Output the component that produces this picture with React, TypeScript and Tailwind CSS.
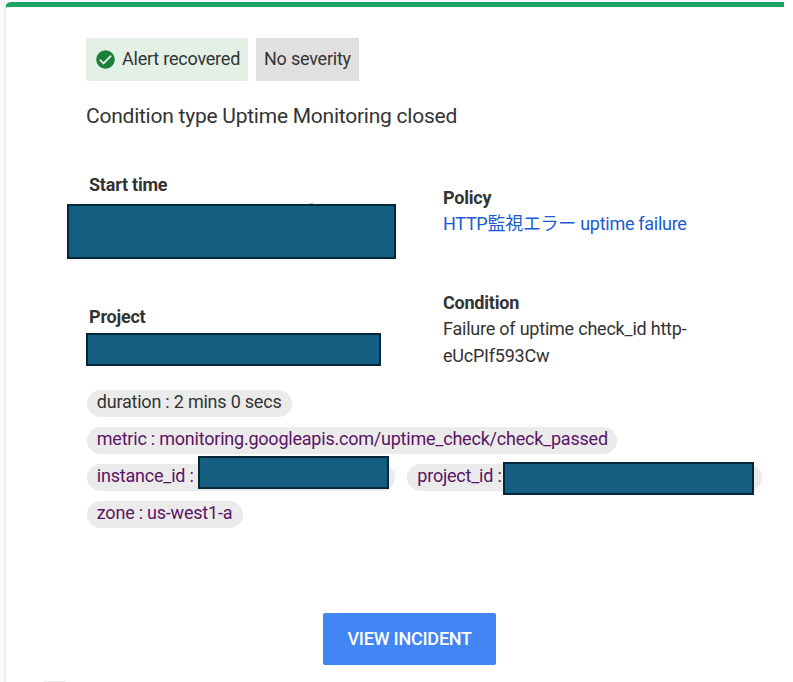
import type { ReactNode } from "react";

function Redacted({ className }: { className: string }) {
  return <div className={`border-2 border-[#04263a] bg-[#156082] ${className}`} />;
}

function Chip({ children, className }: { children: ReactNode; className: string }) {
  return (
    <div className={`relative h-[26.5px] rounded-full bg-[#ebebeb] pl-[10.3px] leading-[24px] ${className}`}>
      {children}
    </div>
  );
}

export default function App() {
  return (
    <div className="flex h-[682px] w-[793px] overflow-hidden bg-white font-['Roboto','Noto_Sans_CJK_JP',sans-serif] text-[18px] leading-[26px] tracking-[-0.22px] text-[#333333]">
      <div className="w-[5px] shrink-0 bg-linear-to-r from-[#fcfcfc] to-[#f5f5f5]" />
      <main className="mt-[2px] flex h-[680px] w-[779px] shrink-0 flex-col whitespace-nowrap rounded-tl-[6px] border-l border-t-[5px] border-l-[#e8e8e8] border-t-[#1ca261] bg-white">
        <div className="flex shrink-0 gap-[8px] pl-[80px] pt-[31px]">
          <div className="flex h-[43px] w-[162px] items-center rounded-[2px] bg-[#e2f0e6] pl-[10px]">
            <svg className="mr-[7px] size-[19px] shrink-0" viewBox="0 0 19 19" fill="none">
              <circle cx="9.5" cy="9.5" r="9.3" fill="#188038" />
              <path d="m3.8 9.6 3.7 3.7 7.6-7.6" stroke="#e2f0e6" strokeWidth="1.9" />
            </svg>
            <span className="pb-[2px]">Alert recovered</span>
          </div>
          <div className="h-[43px] w-[103px] bg-[#e0e0e0] pl-[8px] pt-[8px]">
            <span>No severity</span>
          </div>
        </div>
        <h1 className="mt-[21px] shrink-0 pl-[80px] text-[21px] leading-[28px] tracking-[-0.24px]">
          Condition type Uptime Monitoring closed
        </h1>
        <div className="mt-[41px] flex h-[219px] shrink-0">
          <section className="w-[376px] pl-[61px]">
            <h2 className="pl-[22px] pt-px font-bold">Start time</h2>
            <div className="ml-[243px] mt-[5px] h-px w-[3px] bg-[#b8b8b8]" />
            <Redacted className="h-[55px] w-[329px]" />
            <h2 className="mt-[45px] pl-[22px] font-bold">Project</h2>
            <Redacted className="ml-[19px] mt-[3px] h-[33px] w-[295px]" />
          </section>
          <section className="pl-[61px] pt-[14px]">
            <h2 className="font-bold">Policy</h2>
            <a className="block tracking-[-0.28px] text-[#1a5bd3]">HTTP監視エラー uptime failure</a>
            <h2 className="mt-[53px] font-bold">Condition</h2>
            <p>Failure of uptime check_id http-</p>
            <p className="pt-px">eUcPIf593Cw</p>
          </section>
        </div>
        <div className="flex shrink-0 flex-col gap-[10.5px] pl-[80.5px] text-[#5b1464]">
          <Chip className="w-[205px] text-[#333333]">duration : 2 mins 0 secs</Chip>
          <Chip className="w-[530.5px]">metric : monitoring.googleapis.com/uptime_check/check_passed</Chip>
          <div className="flex gap-[12.5px]">
            <Chip className="w-[308px]">
              instance_id :
              <Redacted className="absolute left-[111.5px] top-[-8px] h-[33px] w-[191px]" />
            </Chip>
            <Chip className="w-[355px]">
              project_id :
              <Redacted className="absolute left-[96px] top-[-2px] h-[33px] w-[251px]" />
            </Chip>
          </div>
          <Chip className="w-[156px]">zone : us-west1-a</Chip>
        </div>
        <button className="ml-[317.4px] mt-[85px] block h-[52px] w-[172.5px] shrink-0 rounded-[2px] bg-[#4285f4] font-medium text-white">
          VIEW INCIDENT
        </button>
        <div className="ml-[36px] mt-[16.5px] h-[4px] w-[25px] shrink-0 rounded-t-[3px] bg-[#ededed]" />
      </main>
    </div>
  );
}
